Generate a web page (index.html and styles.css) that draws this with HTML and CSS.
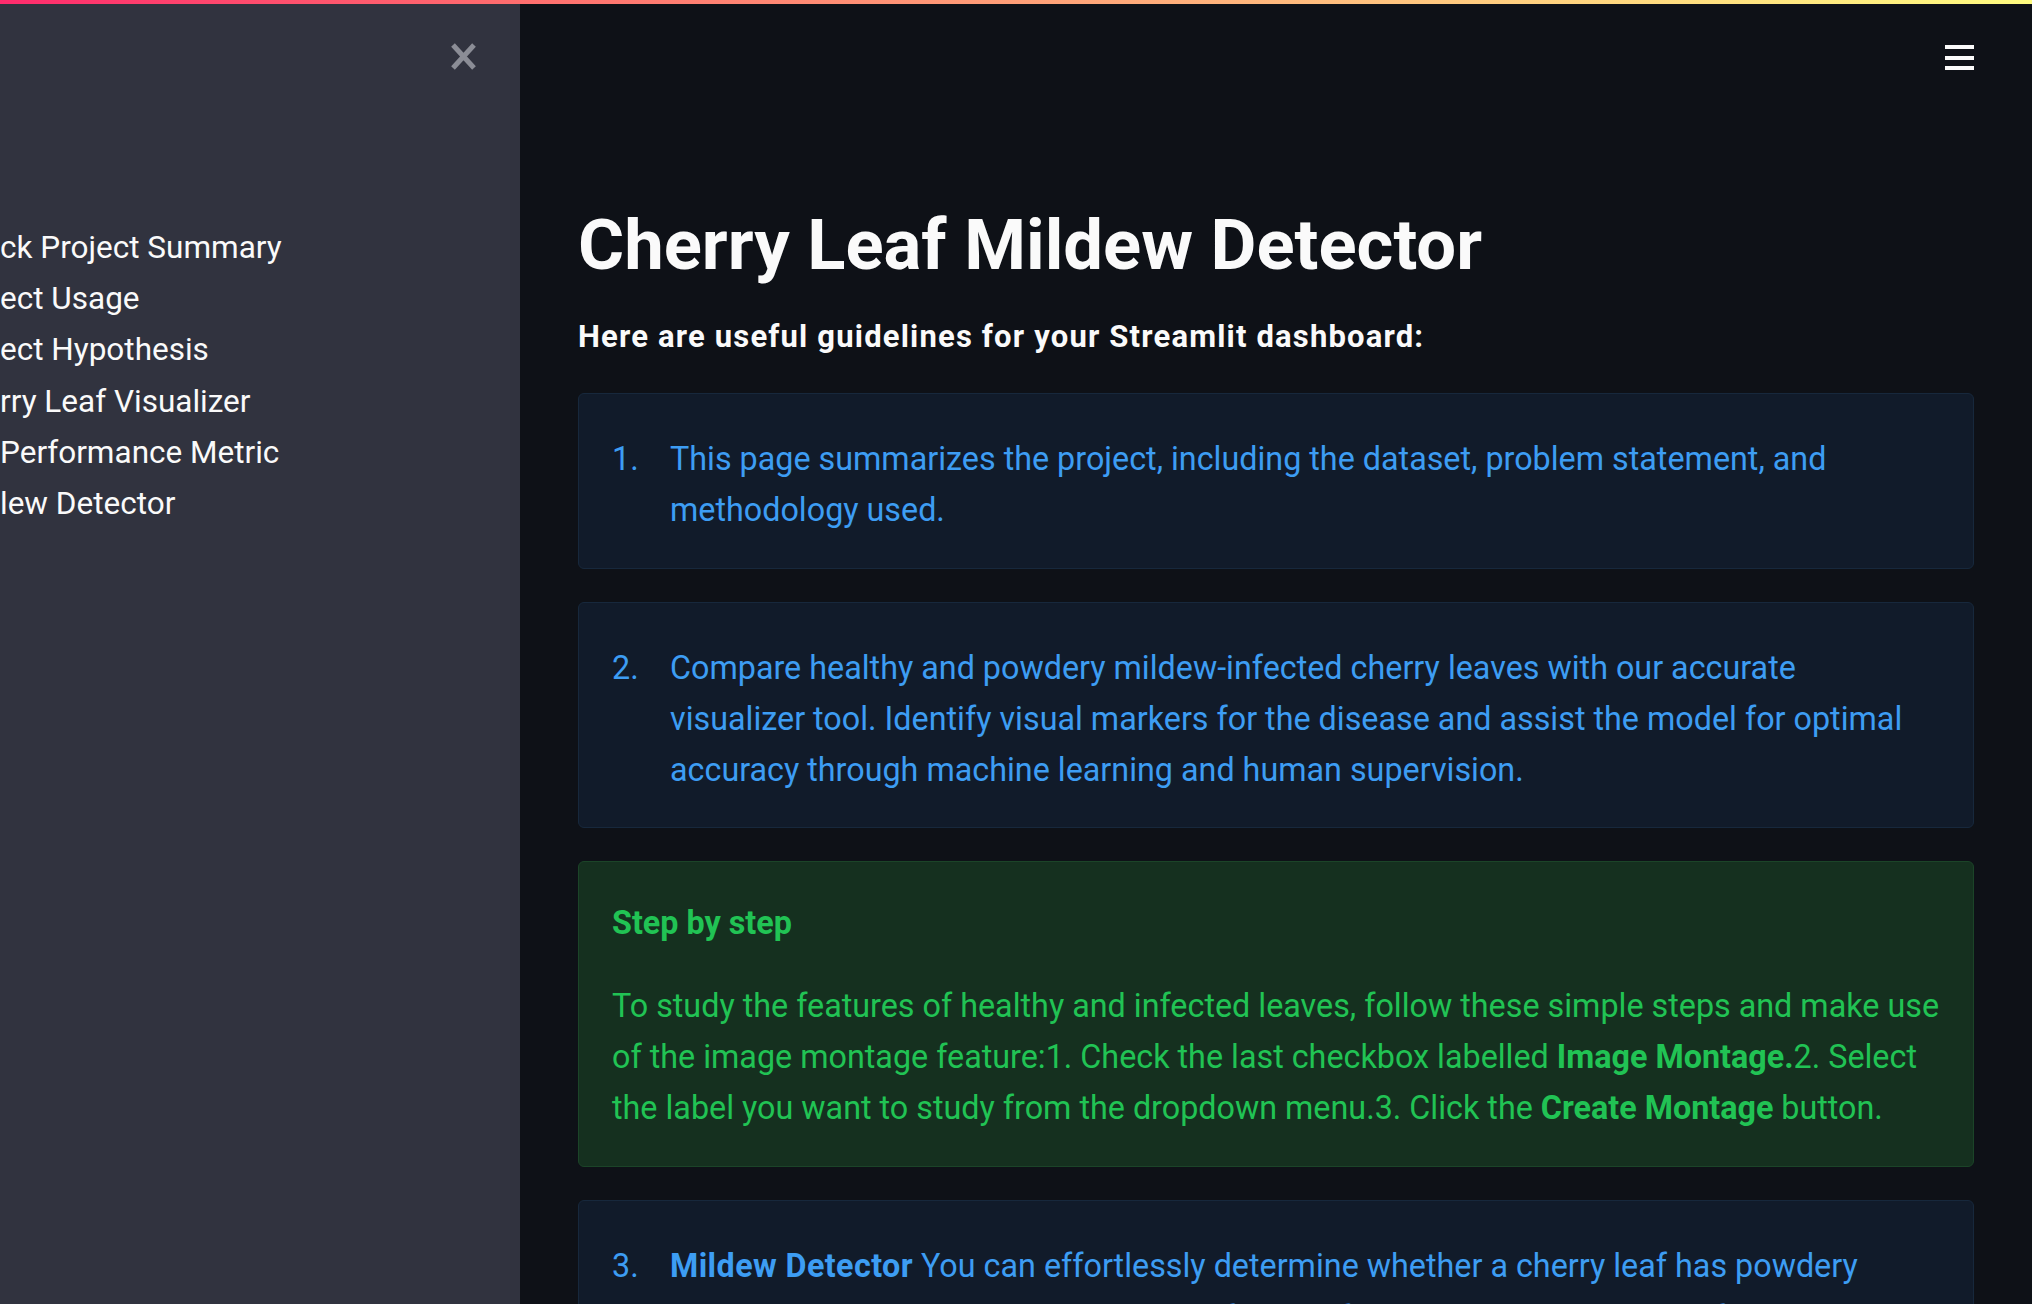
FILE: index.html
```html
<!DOCTYPE html>
<html lang="en">
<head>
<meta charset="utf-8">
<title>Cherry Leaf Mildew Detector</title>
<link rel="stylesheet" href="styles.css">
</head>
<body>
<div class="decoration"></div>
<div class="app">
  <aside class="sidebar">
    <div class="sidebar-top">
      <button class="close" aria-label="Close sidebar">
        <svg width="27" height="29" viewBox="0 0 27 29" aria-hidden="true">
          <path d="M3 3 L24 26 M24 3 L3 26" stroke="#8b8d96" stroke-width="5" fill="none"/>
        </svg>
      </button>
    </div>
    <ul class="nav">
      <li>ck Project Summary</li>
      <li>ect Usage</li>
      <li>ect Hypothesis</li>
      <li>rry Leaf Visualizer</li>
      <li>Performance Metric</li>
      <li>lew Detector</li>
    </ul>
  </aside>
  <main class="main">
    <header class="main-header">
      <button class="menu" aria-label="Menu">
        <svg width="29" height="25" viewBox="0 0 29 25" aria-hidden="true">
          <rect x="0" y="0" width="29" height="4" fill="#fafafa"/>
          <rect x="0" y="11" width="29" height="4" fill="#fafafa"/>
          <rect x="0" y="21" width="29" height="4" fill="#fafafa"/>
        </svg>
      </button>
    </header>
    <section class="block">
      <h1 class="title">Cherry Leaf Mildew Detector</h1>
      <p class="subtitle">Here are useful guidelines for your Streamlit dashboard:</p>

      <div class="alert alert-info">
        <div class="item">
          <span class="num">1.</span>
          <span class="text">This page summarizes the project, including the dataset, problem statement, and<br>methodology used.</span>
        </div>
      </div>

      <div class="alert alert-info">
        <div class="item">
          <span class="num">2.</span>
          <span class="text">Compare healthy and powdery mildew-infected cherry leaves with our accurate<br>visualizer tool. Identify visual markers for the disease and assist the model for optimal<br>accuracy through machine learning and human supervision.</span>
        </div>
      </div>

      <div class="alert alert-success">
        <p class="alert-heading">Step by step</p>
        <p>To study the features of healthy and infected leaves, follow these simple steps and make use<br>of the image montage feature:1. Check the last checkbox labelled <b>Image Montage.</b>2. Select<br>the label you want to study from the dropdown menu.3. Click the <b>Create Montage</b> button.</p>
      </div>

      <div class="alert alert-info">
        <div class="item">
          <span class="num">3.</span>
          <span class="text"><b class="wide">Mildew Detector</b> You can effortlessly determine whether a cherry leaf has powdery<br>mildew or not by uploading an image of the leaf, and download a report of the result.</span>
        </div>
      </div>
    </section>
  </main>
</div>
</body>
</html>
```

FILE: styles.css
```css
* {
  box-sizing: border-box;
}

html,
body {
  margin: 0;
  height: 1304px;
  overflow: hidden;
}

body {
  background: #0e1117;
  color: #fafafa;
  font-family: Roboto, "Liberation Sans", Arial, sans-serif;
}

.decoration {
  height: 4px;
  background: linear-gradient(90deg, #ff2b6d 0%, #ff6d6e 25%, #ffc37f 68%, #fffc80 100%);
}

.app {
  display: flex;
  height: 1300px;
}

.sidebar {
  width: 520px;
  flex: none;
  background: #31333f;
  overflow: hidden;
}

.sidebar-top {
  display: flex;
  justify-content: flex-end;
  padding: 38px 43px 0 0;
}

.close,
.menu {
  display: block;
  padding: 0;
  margin: 0;
  border: 0;
  background: none;
  cursor: pointer;
}

.close svg,
.menu svg {
  display: block;
}

.nav {
  list-style: none;
  margin: 151px 0 0;
  padding: 0;
  font-size: 31.5px;
  line-height: 51.2px;
  color: #fafafa;
  white-space: nowrap;
}

.main {
  flex: 1;
  min-width: 0;
  overflow: hidden;
}

.main-header {
  display: flex;
  justify-content: flex-end;
  padding: 41px 58px 0 0;
}

.block {
  padding: 132px 58px 0;
}

.title {
  margin: 0;
  font-size: 70.6px;
  line-height: 86px;
  font-weight: 700;
  color: #fafafa;
}

.subtitle {
  margin: 24px 0 31.5px;
  font-size: 31px;
  line-height: 49.6px;
  font-weight: 700;
  letter-spacing: 1.17px;
  color: #fafafa;
}

.alert {
  border: 1px solid;
  border-radius: 6px;
  padding: 40px 33px 31px;
  margin-bottom: 33px;
  font-size: 32.3px;
  line-height: 51.2px;
  white-space: nowrap;
}

.alert-info {
  background: #111b2a;
  border-color: #17283c;
  color: #3d9df3;
}

.alert-success {
  background: #15301f;
  border-color: #1b4428;
  color: #21c354;
  padding: 35.5px 33px 32px;
}

.alert p {
  margin: 0;
}

.alert p + p {
  margin-top: 32px;
}

.alert-heading {
  font-weight: 700;
}

.wide {
  letter-spacing: 0.4px;
}

.item {
  display: grid;
  grid-template-columns: 58px auto;
}
```
